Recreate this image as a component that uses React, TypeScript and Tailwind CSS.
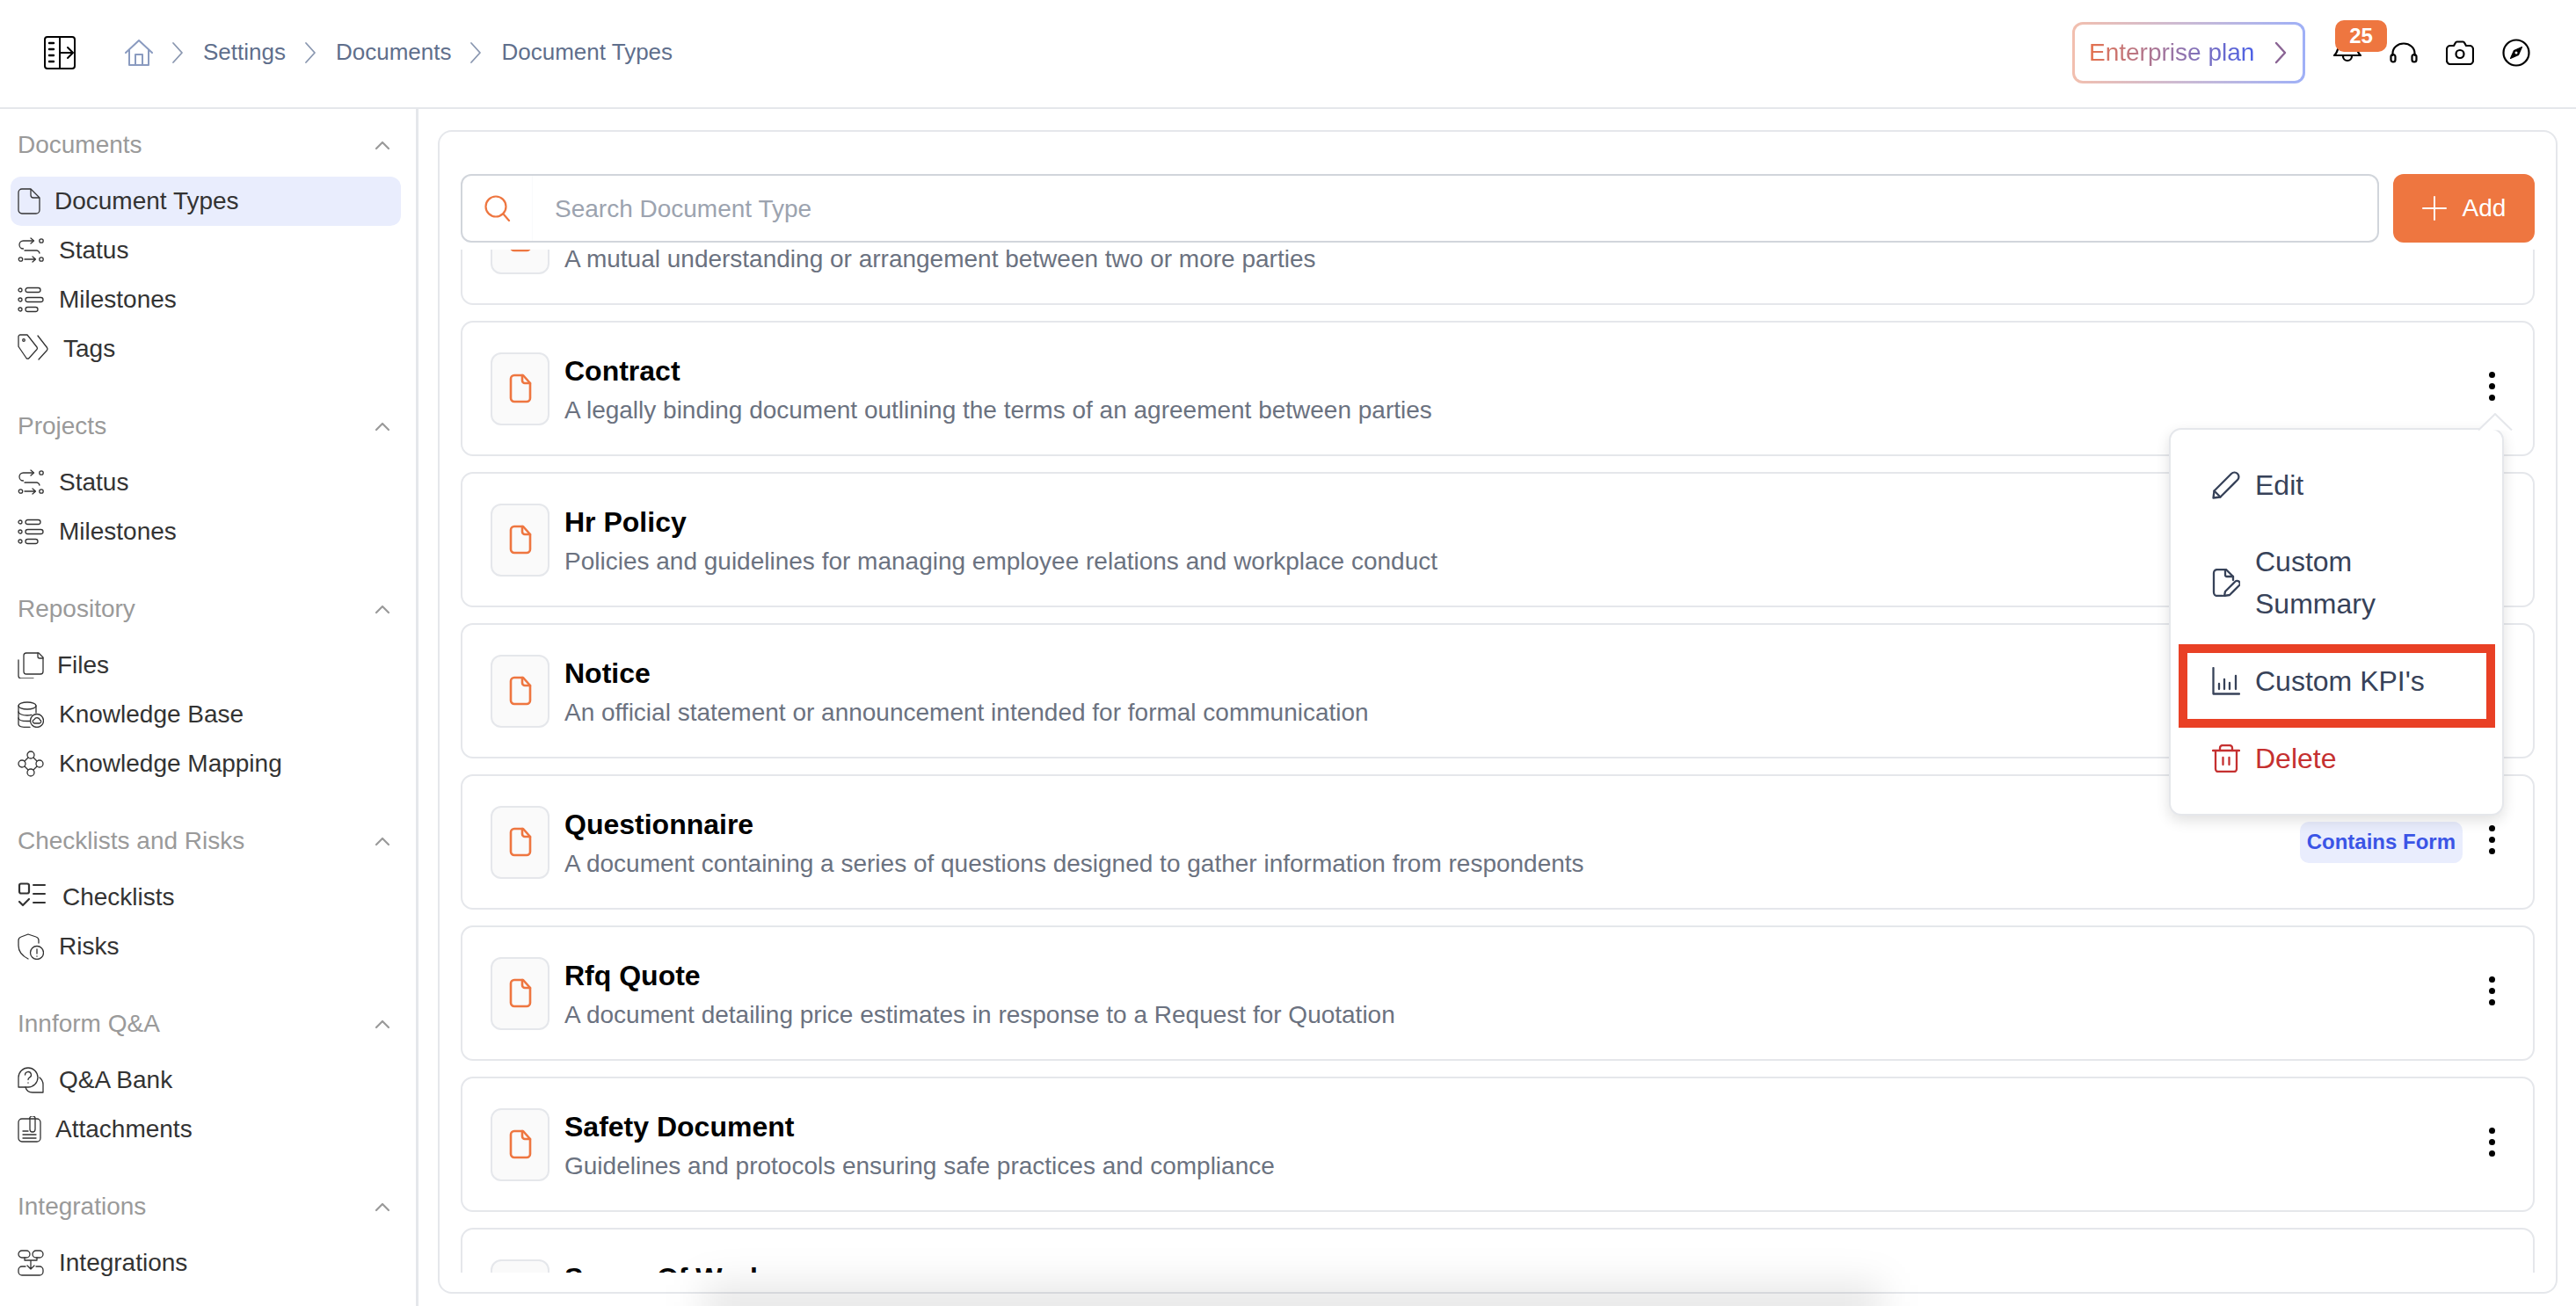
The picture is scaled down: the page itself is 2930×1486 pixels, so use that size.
import React from "react";

type IP = { className?: string };
const S = ({ children, size = 30, vb = 30, className = "", sw = 1.3 }: { children: React.ReactNode; size?: number; vb?: number; className?: string; sw?: number }) => (
  <svg width={size} height={size} viewBox={`0 0 ${vb} ${vb}`} fill="none" stroke="currentColor" strokeWidth={sw} strokeLinecap="round" strokeLinejoin="round" className={`shrink-0 ${className}`}>
    {children}
  </svg>
);

const DocIcon = () => (
  <svg width="26" height="30" viewBox="0 0 26 30" fill="none" stroke="currentColor" strokeWidth="1.3" strokeLinejoin="round" className="shrink-0">
    <path d="M5 1h10l10 10v14a4 4 0 0 1-4 4H5a4 4 0 0 1-4-4V5a4 4 0 0 1 4-4Z" />
    <path d="M15 1v7a3 3 0 0 0 3 3h7" />
  </svg>
);
const StatusIcon = () => (
  <S>
    <path d="M18 4H6.5a4.5 4.5 0 0 0 0 9" />
    <path d="M15 1l3.5 3-3.5 3" />
    <circle cx="27" cy="4" r="2.2" />
    <path d="M8 15h14a4 4 0 0 1 3 3" />
    <circle cx="3.5" cy="25" r="2.2" />
    <path d="M8 25h12M17 22l3.5 3-3.5 3" />
    <circle cx="27" cy="25" r="2.2" />
  </S>
);
const MilestoneIcon = () => (
  <S>
    <circle cx="3" cy="4" r="2" />
    <rect x="9" y="1.5" width="17" height="5" rx="2.5" />
    <circle cx="3" cy="15" r="2" />
    <rect x="9" y="12.5" width="20" height="5" rx="2.5" />
    <circle cx="3" cy="26" r="2" />
    <rect x="9" y="23.5" width="14" height="5" rx="2.5" />
  </S>
);
const TagsIcon = () => (
  <S size={36} vb={36}>
    <path d="M1 4a2 2 0 0 1 2-2h8l11 14a2 2 0 0 1 0 2.5l-9 10a2 2 0 0 1-3 0L1.5 16a2 2 0 0 1-.5-1.5Z" />
    <circle cx="7" cy="8" r="1.3" />
    <path d="M23 3l10.5 13.5a2.5 2.5 0 0 1 0 3L24 30" />
  </S>
);
const FilesIcon = () => (
  <S>
    <path d="M10 1h14l5 5v16a3 3 0 0 1-3 3H10a3 3 0 0 1-3-3V4a3 3 0 0 1 3-3Z" />
    <path d="M23 1v4a2 2 0 0 0 2 2h4" />
    <path d="M1 9v18a3 3 0 0 0 2.500 3H18" />
  </S>
);
const KBIcon = () => (
  <S>
    <ellipse cx="11" cy="5" rx="10" ry="4" />
    <path d="M1 5v21c0 2 4 3.500 10 3.500h3" />
    <path d="M1 12c0 2 4 4 10 4 2 0 3-.2 5-.6" />
    <path d="M1 19c0 2 4 3.500 10 3.500h3" />
    <path d="M21 5v8" />
    <circle cx="22" cy="22" r="7.500" />
    <path d="M19 25h6a2 2 0 0 0 .5-3.800 3.500 3.500 0 0 0-6.500-.5A2.200 2.200 0 0 0 19 25Z" />
  </S>
);
const KMIcon = () => (
  <S>
    <circle cx="15" cy="5" r="4" />
    <circle cx="5" cy="15" r="4" />
    <circle cx="25" cy="15" r="4" />
    <circle cx="15" cy="25" r="4" />
    <path d="M12 8l-4 4M18 8l4 4M8 18l4 4M22 18l-4 4" />
  </S>
);
const CheckIcon = () => (
  <S size={34} vb={34}>
    <rect x="2" y="1.500" width="11" height="11" rx="2" strokeWidth="2.200" />
    <path d="M2 22l4 4 7-7" strokeWidth="2.200" />
    <path d="M18 3h13M18 13h13M18 23h13" strokeWidth="2" />
  </S>
);
const RiskIcon = () => (
  <S>
    <path d="M12 1l9 3c2 .6 3 2 3 4v3M12 1L4 4C2 4.600 1 6 1 8v6c0 7 5 12 11 15" />
    <circle cx="22" cy="22" r="7.500" />
    <path d="M22 18v5M22 26v.2" />
  </S>
);
const QAIcon = () => (
  <S>
    <path d="M1 23V12a11 11 0 1 1 11 11Z" />
    <path d="M8.500 9a3.500 3.500 0 1 1 5 3.200c-1 .5-1.500 1-1.500 2.300M12 18v.2" />
    <path d="M25 12c3 2.500 4 5 4 8v9H17c-4 0-7-2-8-6" />
  </S>
);
const AttachIcon = () => (
  <S>
    <rect x="1" y="3" width="25" height="26" rx="4" />
    <path d="M20 3v12a3 3 0 0 1-6 0V4a3 3 0 0 1 6-2" />
    <path d="M6 17h6M6 21h15M6 25h15" />
  </S>
);
const IntegrationIcon = () => (
  <S>
    <rect x="1" y="1" width="13" height="8" rx="4" />
    <rect x="17" y="1" width="12" height="8" rx="4" />
    <path d="M8 9v3h14V9M15 12v10M11 18l4 4 4-4" />
    <path d="M9 19H5a4 4 0 0 0-4 4v2a4 4 0 0 0 4 4h20a4 4 0 0 0 4-4v-2a4 4 0 0 0-4-4h-4" />
  </S>
);
const Chevron = ({ className = "" }: IP) => (
  <svg width="18" height="12" viewBox="0 0 18 12" fill="none" stroke="currentColor" strokeWidth="2.200" strokeLinecap="round" strokeLinejoin="round" className={className}>
    <path d="M2 10l7-7 7 7" />
  </svg>
);
const Crumb = () => (
  <svg width="15" height="26" viewBox="0 0 15 26" fill="none" stroke="#8a97b0" strokeWidth="1.800" strokeLinecap="round" strokeLinejoin="round" className="shrink-0">
    <path d="M2 2l10 11L2 24" />
  </svg>
);
const OrangeFile = () => (
  <svg width="26" height="34" viewBox="0 0 26 34" fill="none" stroke="#ee7640" strokeWidth="2.600" strokeLinejoin="round" strokeLinecap="round">
    <path d="M6 2h10l8 9v17a4 4 0 0 1-4 4H6a4 4 0 0 1-4-4V6a4 4 0 0 1 4-4Z" />
    <path d="M15 2v6a3 3 0 0 0 3 3h6" />
  </svg>
);
const Dots = () => (
  <div className="flex flex-col items-center gap-[6px] w-[8px] shrink-0 -mt-[6px]">
    <span className="w-[7px] h-[7px] rounded-full bg-black" />
    <span className="w-[7px] h-[7px] rounded-full bg-black" />
    <span className="w-[7px] h-[7px] rounded-full bg-black" />
  </div>
);

type Item = { label: string; icon: React.ReactNode; gap: string; active?: boolean };
const sections: { title: string; items: Item[] }[] = [
  {
    title: "Documents",
    items: [
      { label: "Document Types", icon: <DocIcon />, gap: "gap-[16px]", active: true },
      { label: "Status", icon: <StatusIcon />, gap: "gap-[17px]" },
      { label: "Milestones", icon: <MilestoneIcon />, gap: "gap-[17px]" },
      { label: "Tags", icon: <TagsIcon />, gap: "gap-[16px]" },
    ],
  },
  {
    title: "Projects",
    items: [
      { label: "Status", icon: <StatusIcon />, gap: "gap-[17px]" },
      { label: "Milestones", icon: <MilestoneIcon />, gap: "gap-[17px]" },
    ],
  },
  {
    title: "Repository",
    items: [
      { label: "Files", icon: <FilesIcon />, gap: "gap-[15px]" },
      { label: "Knowledge Base", icon: <KBIcon />, gap: "gap-[17px]" },
      { label: "Knowledge Mapping", icon: <KMIcon />, gap: "gap-[17px]" },
    ],
  },
  {
    title: "Checklists and Risks",
    items: [
      { label: "Checklists", icon: <CheckIcon />, gap: "gap-[17px]" },
      { label: "Risks", icon: <RiskIcon />, gap: "gap-[17px]" },
    ],
  },
  {
    title: "Innform Q&A",
    items: [
      { label: "Q&A Bank", icon: <QAIcon />, gap: "gap-[17px]" },
      { label: "Attachments", icon: <AttachIcon />, gap: "gap-[13px]" },
    ],
  },
  {
    title: "Integrations",
    items: [{ label: "Integrations", icon: <IntegrationIcon />, gap: "gap-[17px]" }],
  },
];

const docs = [
  { t: "Agreement", d: "A mutual understanding or arrangement between two or more parties" },
  { t: "Contract", d: "A legally binding document outlining the terms of an agreement between parties" },
  { t: "Hr Policy", d: "Policies and guidelines for managing employee relations and workplace conduct" },
  { t: "Notice", d: "An official statement or announcement intended for formal communication" },
  { t: "Questionnaire", d: "A document containing a series of questions designed to gather information from respondents", badge: true },
  { t: "Rfq Quote", d: "A document detailing price estimates in response to a Request for Quotation" },
  { t: "Safety Document", d: "Guidelines and protocols ensuring safe practices and compliance" },
  { t: "Scope Of Work", d: "A document defining the work to be performed" },
];

export default function App() {
  return (
    <div className="relative w-[2930px] h-[1486px] overflow-hidden bg-white font-['Liberation_Sans',Arial,sans-serif] flex flex-col">
      <header className="h-[124px] shrink-0 border-b-2 border-[#e5e7eb] flex items-center justify-between pl-[50px] pr-[52px] pb-[3px]">
        <div className="flex items-center">
          <svg width="36" height="38" viewBox="0 0 36 38" fill="none" stroke="#000" strokeWidth="2" strokeLinecap="round" strokeLinejoin="round" className="mr-[56px]">
            <rect x="1" y="1" width="34" height="36" rx="3" />
            <path d="M18 1v36" />
            <path d="M6 8h5M6 15h5M6 22h5M6 29h5" strokeWidth="2.400" />
            <path d="M18 19h14M27 13l6 6-6 6" />
          </svg>
          <div className="flex items-center gap-[21px] text-[26px] text-[#5f6f8c]">
            <svg width="32" height="30" viewBox="0 0 32 30" fill="none" stroke="#8a9bc0" strokeWidth="2" strokeLinecap="round" strokeLinejoin="round">
              <path d="M1 15L16 1l15 14" />
              <path d="M5 12v17h22V12" />
              <path d="M12 29V17h8v12" />
            </svg>
            <Crumb />
            <span>Settings</span>
            <Crumb />
            <span>Documents</span>
            <Crumb />
            <span>Document Types</span>
          </div>
        </div>
        <div className="flex items-center gap-[32px]">
          <div className="w-[265px] h-[70px] p-[3px] rounded-[12px] bg-gradient-to-r from-[#f2bfae] to-[#9fb0f7]">
            <div className="w-full h-full rounded-[9px] bg-white flex items-center pl-[16px] gap-[23px]">
              <span className="text-[28px] bg-gradient-to-r from-[#e5704a] to-[#4a5fe6] bg-clip-text text-transparent">Enterprise plan</span>
              <svg width="15" height="26" viewBox="0 0 15 26" fill="none" stroke="#8a6494" strokeWidth="2.400" strokeLinecap="round" strokeLinejoin="round">
                <path d="M2 2l10 11L2 24" />
              </svg>
            </div>
          </div>
          <div className="relative w-[32px] h-[34px] mb-[10px]">
            <svg width="32" height="34" viewBox="0 0 32 34" fill="none" stroke="#000" strokeWidth="2.200" strokeLinecap="round" strokeLinejoin="round">
              <path d="M16 2a10 10 0 0 0-10 10c0 9-5 13-5 13h30s-5-4-5-13A10 10 0 0 0 16 2Z" />
              <path d="M11 26a5 5 0 0 0 10 0" />
            </svg>
            <span className="absolute left-[2px] top-[-15px] w-[59px] h-[36px] rounded-[10px] bg-[#ee7640] text-white text-[24px] font-bold flex items-center justify-center">25</span>
          </div>
          <svg width="32" height="24" viewBox="0 0 32 24" fill="none" stroke="#000" strokeWidth="2.200" strokeLinecap="round" strokeLinejoin="round">
            <path d="M3.500 15v-2.500a12.500 11 0 0 1 25 0V15" />
            <rect x="1.500" y="14" width="5" height="8.500" rx="2.500" />
            <rect x="25.500" y="14" width="5" height="8.500" rx="2.500" />
          </svg>
          <svg width="32" height="28" viewBox="0 0 32 28" fill="none" stroke="#000" strokeWidth="2.200" strokeLinecap="round" strokeLinejoin="round">
            <path d="M5 6h4l2-3.500c.3-.6.800-1 1.500-1h7c.7 0 1.200.4 1.500 1L23 6h4a4 4 0 0 1 4 4v13a4 4 0 0 1-4 4H5a4 4 0 0 1-4-4V10a4 4 0 0 1 4-4Z" />
            <circle cx="16" cy="15.500" r="4.500" />
          </svg>
          <svg width="32" height="32" viewBox="0 0 32 32" fill="none" stroke="#000" strokeWidth="2.200" strokeLinejoin="round">
            <circle cx="16" cy="16" r="14.500" />
            <path d="M22.500 9.500l-4 9-9 4 4-9Z" fill="#000" strokeWidth="1.200" />
            <circle cx="16" cy="16" r="1.500" fill="#fff" stroke="none" />
          </svg>
        </div>
      </header>

      <div className="flex flex-1 min-h-0">
        <aside className="w-[476px] shrink-0 border-r-[3px] border-[#e5e7eb] pt-[21px] flex flex-col gap-[40.500px]">
          {sections.map((s) => (
            <section key={s.title}>
              <div className="h-[40px] mb-[15.500px] pl-[20px] pr-[29px] flex items-center justify-between text-[28px] text-[#9a9a9a]">
                <span>{s.title}</span>
                <Chevron className="text-[#9a9a9a]" />
              </div>
              <div className="flex flex-col pl-[12px] pr-[17px]">
                {s.items.map((it) => (
                  <div key={s.title + it.label} className={`h-[56px] pl-[8px] flex items-center rounded-[12px] text-[28px] text-[#333333] ${it.gap} ${it.active ? "bg-[#e9edfd]" : ""}`}>
                    {it.icon}
                    <span>{it.label}</span>
                  </div>
                ))}
              </div>
            </section>
          ))}
        </aside>

        <main className="flex-1 min-w-0 pt-[24px] pl-[22px] pr-[21px] pb-[14px] flex">
          <div className="flex-1 min-w-0 border-2 border-[#e5e7eb] rounded-[16px] pt-[48px] pl-[24px] pr-[24px] pb-[22px] flex flex-col">
            <div className="flex gap-[16px] h-[78px] shrink-0 mb-[8px]">
              <div className="flex-1 border-2 border-[#d1d5db] rounded-[12px] flex items-stretch overflow-hidden">
                <div className="w-[80px] shrink-0 border-r border-[#f9fafb] flex items-center justify-center text-[#ee7640]">
                  <svg width="30" height="30" viewBox="0 0 30 30" fill="none" stroke="currentColor" strokeWidth="2.200" strokeLinecap="round">
                    <circle cx="13" cy="13" r="11.500" />
                    <path d="M21.500 21.500L28 29" />
                  </svg>
                </div>
                <input readOnly placeholder="Search Document Type" className="flex-1 min-w-0 pl-[25px] pt-[2px] outline-none text-[28px] placeholder:text-[#9ca3af]" />
              </div>
              <div className="w-[161px] shrink-0 rounded-[12px] bg-[#ee7640] text-white flex items-center justify-center gap-[18px] text-[28px]">
                <svg width="28" height="28" viewBox="0 0 28 28" fill="none" stroke="currentColor" strokeWidth="2" strokeLinecap="round">
                  <path d="M14 1v26M1 14h26" />
                </svg>
                <span>Add</span>
              </div>
            </div>
            <div className="flex-1 min-h-0 overflow-hidden">
              <div className="-mt-[91px] flex flex-col gap-[18px]">
                {docs.map((d) => (
                  <div key={d.t} className="h-[154px] shrink-0 border-2 border-[#e5e7eb] rounded-[14px] pl-[32px] pr-[43px] flex items-center gap-[17px]">
                    <div className="w-[67px] h-[83px] shrink-0 rounded-[12px] border-2 border-[#e5e7eb] bg-[#fafafa] flex items-center justify-center">
                      <OrangeFile />
                    </div>
                    <div className="flex-1 min-w-0 flex flex-col gap-[1px] pt-[5px]">
                      <div className="text-[32px] leading-[44px] font-bold text-black">{d.t}</div>
                      <div className="text-[28px] leading-[44px] text-[#6b7280]">{d.d}</div>
                    </div>
                    {d.badge && (
                      <span className="h-[47px] px-[8px] mr-[12px] rounded-[10px] bg-[#e9edfd] text-[#3b55e6] text-[24px] font-bold flex items-center">Contains Form</span>
                    )}
                    <Dots />
                  </div>
                ))}
              </div>
            </div>
          </div>
        </main>
      </div>

      {/* popover menu */}
      <div className="absolute left-[2467px] top-[487px] w-[381px] h-[441px] rounded-[14px] border-2 border-[#e5e7eb] bg-white shadow-[0_6px_16px_rgba(0,0,0,0.12)] text-[32px] text-[#374259]">
        <svg width="40" height="20" viewBox="0 0 40 20" fill="#fff" stroke="#e5e7eb" strokeWidth="2" className="absolute left-[349px] top-[-19px]">
          <path d="M1 19.500L20 1l19 18.500" />
        </svg>
        <div className="flex flex-col pl-[47px] pr-[10px]">
          <div className="h-[126px] flex items-center gap-[17px]">
            <svg width="32" height="32" viewBox="0 0 32 32" fill="none" stroke="currentColor" strokeWidth="2.300" strokeLinejoin="round" strokeLinecap="round" className="shrink-0">
              <path d="M1.500 30.500l1-8L22 3a4.500 4.500 0 0 1 7 7L9.500 29.500Z" />
              <path d="M2.500 22.500l7 7" />
            </svg>
            <span>Edit</span>
          </div>
          <div className="h-[96px] flex items-center gap-[17px] leading-[48px]">
            <svg width="32" height="32" viewBox="0 0 32 32" fill="none" stroke="currentColor" strokeWidth="2.300" strokeLinejoin="round" strokeLinecap="round" className="shrink-0">
              <path d="M12 31H6a4 4 0 0 1-4-4V5a4 4 0 0 1 4-4h10l8 8v4" />
              <path d="M15 1v6a2 2 0 0 0 2 2h7" />
              <path d="M14 31l1-5 11-11a3 3 0 0 1 5 4L20 30Z" />
            </svg>
            <span>Custom<br />Summary</span>
          </div>
          <div className="h-[88px] mt-[20px] flex items-center gap-[17px]">
            <svg width="32" height="32" viewBox="0 0 32 32" fill="none" stroke="currentColor" strokeWidth="2.300" strokeLinecap="round" strokeLinejoin="round" className="shrink-0">
              <path d="M1.500 1v29.500H31" />
              <path d="M8 19v6M14 14v11M20 18v7M27 10v15" />
            </svg>
            <span>Custom KPI's</span>
          </div>
          <div className="h-[88px] flex items-center gap-[17px] text-[#c53030]">
            <svg width="32" height="32" viewBox="0 0 32 32" fill="none" stroke="currentColor" strokeWidth="2.300" strokeLinecap="round" strokeLinejoin="round" className="shrink-0">
              <path d="M1 7h30M4 7v21a3 3 0 0 0 3 3h18a3 3 0 0 0 3-3V7" />
              <path d="M9 7V4a3 3 0 0 1 3-3h8a3 3 0 0 1 3 3v3" />
              <path d="M12.500 15v8M19.500 15v8" />
            </svg>
            <span>Delete</span>
          </div>
        </div>
      </div>
      {/* annotation */}
      <div className="absolute left-[2478px] top-[733px] w-[360px] h-[95px] border-[10px] border-[#e94025] pointer-events-none" />
      {/* soft floating shadow at the bottom */}
      <div className="absolute left-[800px] top-[1462px] w-[1340px] h-[50px] bg-black/10 blur-[22px] pointer-events-none" />
    </div>
  );
}
